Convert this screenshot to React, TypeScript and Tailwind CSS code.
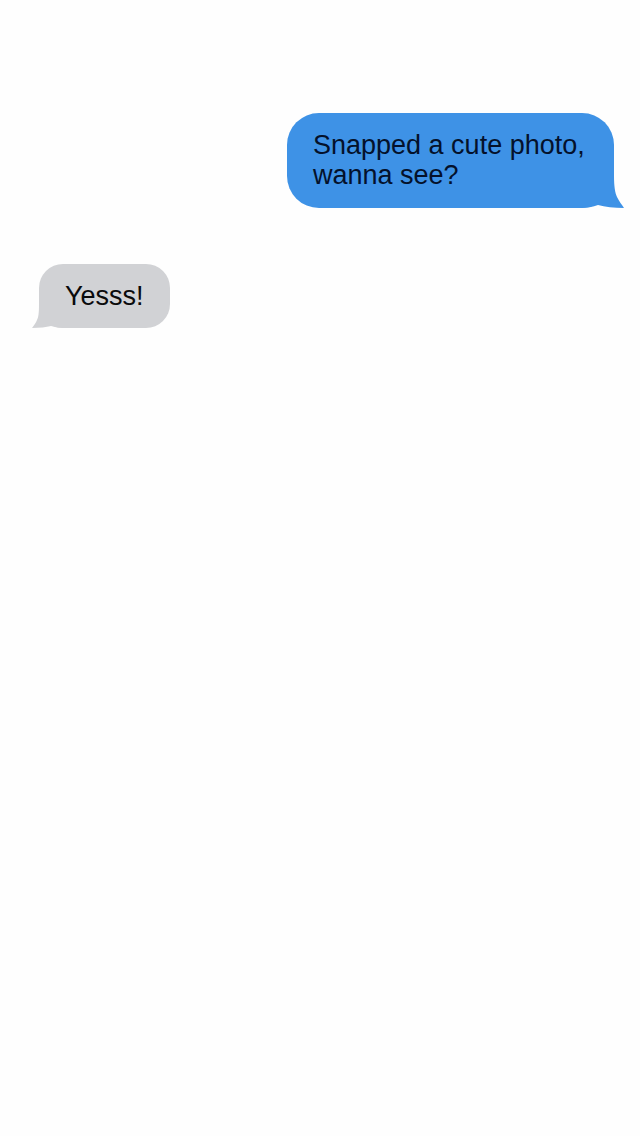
import React from "react";

type Message = {
    id: number;
    text: string;
    mine: boolean;
};

const messages: Message[] = [
    { id: 1, text: "Snapped a cute photo, wanna see?", mine: true },
    { id: 2, text: "Yesss!", mine: false },
];

function SentBubble({ text }: { text: string }) {
    return (
        <li className="relative max-w-[327px] self-end rounded-[32px] bg-[#3e92e6] px-[26px] pt-[17px] pb-[18px] text-[#04112b]">
            {text}
            <svg
                className="absolute -right-[10px] bottom-0 h-[40px] w-[44px] text-[#3e92e6]"
                viewBox="0 0 44 40"
                fill="currentColor"
                aria-hidden="true"
            >
                <path d="M34 0 V8 C34 18 35 25 37 29 C39 33 42 37 44 40 C34 40 25 39 18 37 C13 39 7 40 0 40 V0 Z" />
            </svg>
        </li>
    );
}

function ReceivedBubble({ text }: { text: string }) {
    return (
        <li className="relative max-w-[327px] self-start rounded-3xl bg-[#d1d2d5] px-[26px] py-[17px] text-[#0a0a0c]">
            {text}
            <svg
                className="absolute -left-[7px] bottom-0 h-[32px] w-[32px] text-[#d1d2d5]"
                viewBox="0 0 32 32"
                fill="currentColor"
                aria-hidden="true"
            >
                <path d="M7 0 V6 C7 14 7 20 5 24 C4 27 2 29 0 32 C8 32 14 31 19 30 C23 31 27 32 32 32 V0 Z" />
            </svg>
        </li>
    );
}

export default function App() {
    return (
        <main className="min-h-screen bg-[#fefefe] pt-[113px] pr-[26px] pl-[39px] font-['Liberation_Sans',Arial,sans-serif] text-[27px] leading-[30px]">
            <ul className="flex flex-col gap-14">
                {messages.map((message) =>
                    message.mine ? (
                        <SentBubble key={message.id} text={message.text} />
                    ) : (
                        <ReceivedBubble key={message.id} text={message.text} />
                    )
                )}
            </ul>
        </main>
    );
}
